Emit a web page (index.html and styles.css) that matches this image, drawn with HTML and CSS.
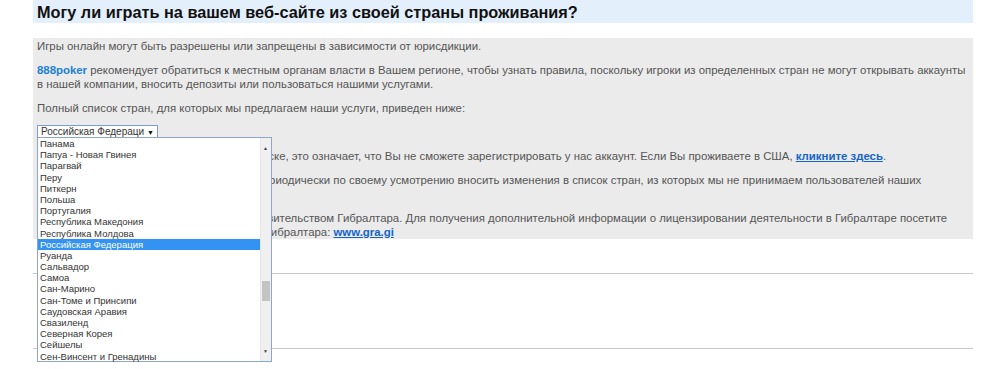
FILE: index.html
```html
<!DOCTYPE html>
<html lang="ru">
<head>
  <meta charset="UTF-8">
  <title>Могу ли играть на вашем веб-сайте из своей страны проживания?</title>
  <link rel="stylesheet" href="styles.css">
</head>
<body>
  <div class="faq">
    <h2 class="question">Могу ли играть на вашем веб-сайте из своей страны проживания?</h2>
    <div class="answer">
      <p>Игры онлайн могут быть разрешены или запрещены в зависимости от юрисдикции.</p>
      <p><a class="brand" href="#">888poker</a> рекомендует обратиться к местным органам власти в Вашем регионе, чтобы узнать правила, поскольку игроки из определенных стран не могут открывать аккаунты в нашей компании, вносить депозиты или пользоваться нашими услугами.</p>
      <p>Полный список стран, для которых мы предлагаем наши услуги, приведен ниже:</p>

      <div class="picker">
        <div class="picker-value">Российская Федераци <span class="arrow">▼</span></div>
        <div class="picker-list">
          <ul>
            <li>Панама</li>
            <li>Папуа - Новая Гвинея</li>
            <li>Парагвай</li>
            <li>Перу</li>
            <li>Питкерн</li>
            <li>Польша</li>
            <li>Португалия</li>
            <li>Республика Македония</li>
            <li>Республика Молдова</li>
            <li class="selected">Российская Федерация</li>
            <li>Руанда</li>
            <li>Сальвадор</li>
            <li>Самоа</li>
            <li>Сан-Марино</li>
            <li>Сан-Томе и Принсипи</li>
            <li>Саудовская Аравия</li>
            <li>Свазиленд</li>
            <li>Северная Корея</li>
            <li>Сейшелы</li>
            <li>Сен-Винсент и Гренадины</li>
          </ul>
          <div class="scrollbar">
            <span class="sb-up">▲</span>
            <span class="sb-thumb"></span>
            <span class="sb-down">▼</span>
          </div>
        </div>
      </div>

      <p>Если Вашей страны нет в приведенном списке, это означает, что Вы не сможете зарегистрировать у нас аккаунт. Если Вы проживаете в США, <a class="link" href="#">кликните здесь</a>.</p>
      <p>Компания 888 оставляет за собою право периодически по своему усмотрению вносить изменения в список стран, из которых мы не принимаем пользователей наших продуктов.</p>
      <p>888poker лицензирован и регулируется правительством Гибралтара. Для получения дополнительной информации о лицензировании деятельности в Гибралтаре посетите веб-сайт Комиссии по делам азартных игр Гибралтара: <a class="link" href="#">www.gra.gi</a></p>
    </div>
    <div class="spacer"></div>
    <hr>
    <div class="spacer tall"></div>
    <hr>
    <div class="spacer"></div>
  </div>
</body>
</html>
```
FILE: styles.css
```css
body {
  margin: 0;
  background: #fff;
  font-family: 'Liberation Sans', Arial, sans-serif;
}
.faq {
  margin: 0 27px 0 33px;
}
.question {
  margin: 0;
  height: 23px;
  padding: 0 4px;
  background: #e4effc;
  color: #111;
  font-size: 16.3px;
  line-height: 25px;
  font-weight: bold;
}
.answer {
  margin-top: 15px;
  background: #ebebeb;
  padding: 1px 5px 0 4px;
  color: #555;
  font-size: 11.4px;
  line-height: 14px;
}
.answer p {
  margin: 0 0 10px;
}
.answer p:last-child {
  margin-bottom: 0;
}
.brand {
  color: #1b7fd6;
  font-weight: bold;
  text-decoration: none;
}
.link {
  color: #1565c8;
  font-weight: bold;
  text-decoration: underline;
}

/* open country select */
.picker {
  position: relative;
  margin: 0 0 11px;
  height: 13px;
}
.picker-value {
  width: 116px;
  height: 11px;
  border: 1px solid #7d9ccf;
  background: #fff;
  color: #333;
  font-size: 10px;
  line-height: 11px;
  padding-left: 3px;
  white-space: nowrap;
  overflow: hidden;
}
.arrow {
  font-size: 7px;
  color: #111;
}
.picker-list {
  position: absolute;
  top: 12px;
  left: 0;
  width: 233px;
  height: 223px;
  border: 1px solid #8fa6cc;
  background: #fff;
  display: flex;
  z-index: 2;
}
.picker-list ul {
  list-style: none;
  margin: 0;
  padding: 0;
  flex: 1;
}
.picker-list li {
  height: 11.2px;
  line-height: 11.2px;
  padding-left: 2px;
  font-size: 9.5px;
  color: #333;
  white-space: nowrap;
}
.picker-list li.selected {
  background: #3393f3;
  color: #fff;
}
.scrollbar {
  width: 10px;
  background: #f0f0f0;
  border-left: 1px solid #e6e6e6;
  position: relative;
}
.sb-up, .sb-down {
  position: absolute;
  left: 2px;
  font-size: 5px;
  color: #444;
}
.sb-up { top: 3px; }
.sb-down { bottom: 3px; }
.sb-thumb {
  position: absolute;
  left: 1px;
  top: 143px;
  width: 8px;
  height: 20px;
  background: #c4c4c4;
}

.spacer {
  height: 34px;
}
.spacer.tall {
  height: 74px;
}
hr {
  margin: 0;
  border: 0;
  border-top: 1px solid #c8c8c8;
}
```
